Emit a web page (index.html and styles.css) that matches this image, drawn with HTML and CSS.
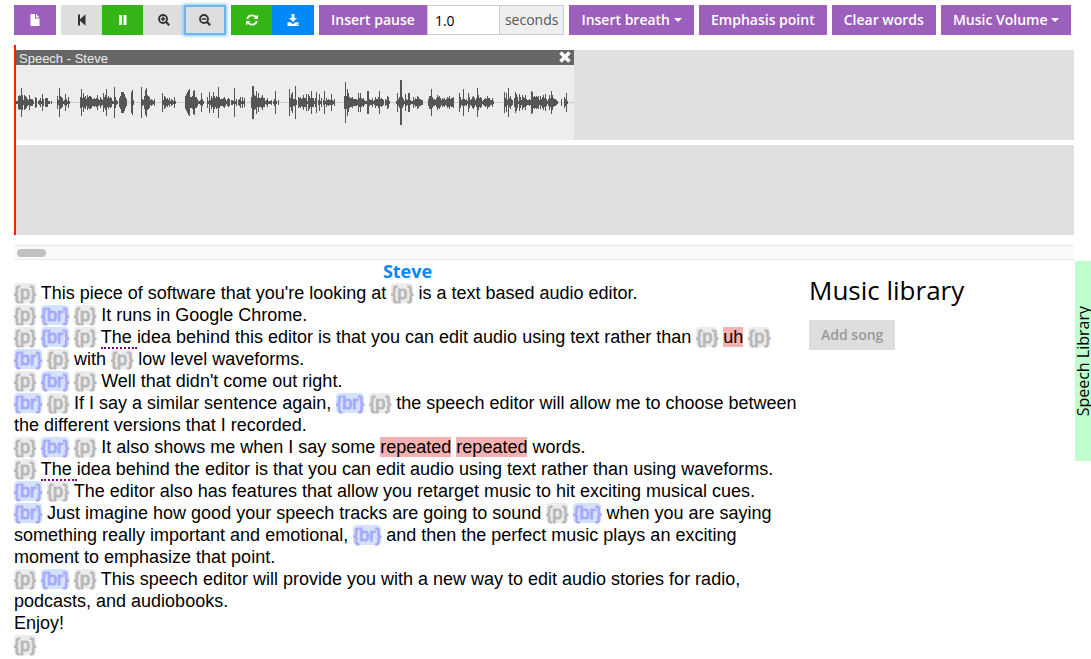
FILE: index.html
```html
<!DOCTYPE html>
<html lang="en">
<head>
<meta charset="utf-8">
<title>Speech editor</title>
<link rel="stylesheet" href="styles.css">
</head>
<body>
<div class="page">
  <div class="toolbar">
    <button class="btn purple icon" aria-label="New file"><svg width="12" height="12" viewBox="0 0 12 12"><path fill="currentColor" d="M1.500 0H6v4.500h4.500V12h-9zM7 0l3.500 3.500H7z"/></svg></button>
    <div class="group">
      <button class="btn gray icon" aria-label="Rewind"><svg width="12" height="12" viewBox="0 0 12 12"><path fill="currentColor" d="M2 .5h2v4.700L9.500.3v11.400L4 6.800v4.700H2z"/></svg></button>
      <button class="btn green icon" aria-label="Pause"><svg width="12" height="12" viewBox="0 0 12 12"><path fill="currentColor" d="M2 1h3v10H2zM6.500 1h3v10h-3z"/></svg></button>
      <button class="btn gray icon" aria-label="Zoom in"><svg width="12" height="12" viewBox="0 0 12 12"><g fill="none" stroke="currentColor"><circle cx="5" cy="5" r="4" stroke-width="1.800"/><path d="M8 8l3.200 3.200" stroke-width="2.200"/><path d="M5 2.800v4.400M2.800 5h4.400" stroke-width="1.500"/></g></svg></button>
      <button class="btn gray icon focused" aria-label="Zoom out"><svg width="12" height="12" viewBox="0 0 12 12"><g fill="none" stroke="currentColor"><circle cx="5" cy="5" r="4" stroke-width="1.800"/><path d="M8 8l3.200 3.200" stroke-width="2.200"/><path d="M2.800 5h4.400" stroke-width="1.500"/></g></svg></button>
    </div>
    <div class="group">
      <button class="btn green icon" aria-label="Refresh"><svg width="12" height="12" viewBox="0 0 12 12"><g fill="none" stroke="currentColor" stroke-width="1.800"><path d="M1.200 5C1.800 2.700 3.700 1.400 6 1.400c1.500 0 2.700.6 3.600 1.600"/><path d="M10.800 7c-.6 2.300-2.500 3.600-4.800 3.600-1.500 0-2.700-.6-3.600-1.600"/></g><path fill="currentColor" d="M12 .5V5H7.500zM0 11.500V7h4.500z"/></svg></button>
      <button class="btn blue icon" aria-label="Download"><svg width="12" height="12" viewBox="0 0 12 12"><path fill="currentColor" d="M4.600 0h2.800v4H10L6 8 2 4h2.600zM.5 8.300h3L6 10.200l2.500-1.900h3V12H.5z"/><path fill="#0089f7" d="M9.500 9.700h1v1h-1z"/></svg></button>
    </div>
    <div class="group">
      <button class="btn purple">Insert pause</button>
      <input class="seconds" id="seconds" type="text" value="1.0">
      <label class="addon" for="seconds">seconds</label>
    </div>
    <button class="btn purple">Insert breath<span class="caret"></span></button>
    <button class="btn purple">Emphasis point</button>
    <button class="btn purple">Clear words</button>
    <button class="btn purple">Music Volume<span class="caret"></span></button>
  </div>

  <div class="timeline">
    <div class="track">
      <div class="clip">
        <div class="clip-head"><span>Speech - Steve</span>
          <button class="close" aria-label="Remove clip"><svg width="12" height="12" viewBox="0 0 12 12"><path stroke="currentColor" stroke-width="3.600" d="M1.500 1.500l9 9M10.500 1.500l-9 9"/></svg></button>
        </div>
        <svg class="wave" viewBox="0 0 560 75" width="560" height="75"><path id="axis" d="M2 37.500H560"/><path id="wave"/></svg>
      </div>
    </div>
    <div class="track"></div>
    <div class="playhead"></div>
  </div>
  <div class="scroller"><div class="thumb"></div></div>

  <div class="content">
    <div class="script">
      <h2 class="speaker">Steve</h2>
      <p><i class="p">{p}</i> This piece of software that you're looking at <i class="p">{p}</i> is a text based audio editor.</p>
      <p><i class="p">{p}</i> <i class="br">{br}</i> <i class="p">{p}</i> It runs in Google Chrome.</p>
      <p><i class="p">{p}</i> <i class="br">{br}</i> <i class="p">{p}</i> <span class="alt">The </span>idea behind this editor is that you can edit audio using text rather than <i class="p">{p}</i> <mark>uh</mark> <i class="p">{p}</i> <i class="br">{br}</i> <i class="p">{p}</i> with <i class="p">{p}</i> low level waveforms.</p>
      <p><i class="p">{p}</i> <i class="br">{br}</i> <i class="p">{p}</i> Well that didn't come out right.</p>
      <p><i class="br">{br}</i> <i class="p">{p}</i> If I say a similar sentence again, <i class="br">{br}</i> <i class="p">{p}</i> the speech editor will allow me to choose between the different versions that I recorded.</p>
      <p><i class="p">{p}</i> <i class="br">{br}</i> <i class="p">{p}</i> It also shows me when I say some <mark>repeated</mark> <mark>repeated</mark> words.</p>
      <p><i class="p">{p}</i> <span class="alt">The </span>idea behind the editor is that you can edit audio using text rather than using waveforms.</p>
      <p><i class="br">{br}</i> <i class="p">{p}</i> The editor also has features that allow you retarget music to hit exciting musical cues.</p>
      <p><i class="br">{br}</i> Just imagine how good your speech tracks are going to sound <i class="p">{p}</i> <i class="br">{br}</i> when you are saying something really important and emotional, <i class="br">{br}</i> and then the perfect music plays an exciting moment to emphasize that point.</p>
      <p><i class="p">{p}</i> <i class="br">{br}</i> <i class="p">{p}</i> This speech editor will provide you with a new way to edit audio stories for radio, podcasts, and audiobooks.</p>
      <p>Enjoy!</p>
      <p><i class="p">{p}</i></p>
    </div>
    <div class="library">
      <h1>Music library</h1>
      <button class="btn gray disabled" disabled>Add song</button>
    </div>
  </div>
</div>
<div class="speech-tab"><span>Speech Library</span></div>
<script src="wave.js"></script>
</body>
</html>
```

FILE: styles.css
```css
* { box-sizing: border-box; }
body { margin: 0; background: #fff; color: #000; font: 14px/20px "Open Sans", sans-serif; overflow: hidden; }
.page { padding: 5px 17px 0 14px; }

.toolbar { display: flex; gap: 5px; white-space: nowrap; }
.group { display: flex; }
.btn { display: flex; align-items: center; height: 30px; margin: 0; padding: 0 12px; border: 0; border-radius: 0; color: #fff; font: 600 14px/20px "Open Sans", sans-serif; }
.icon { width: 41px; flex: none; justify-content: center; }
.toolbar > .icon, .group .blue, .focused { width: 42px; }
.purple { background: #9c5fbb; }
.green { background: #34b616; }
.blue { background: #0089f7; }
.gray { background: #dedede; color: #333; }
.focused { position: relative; border: 2px solid #6cb3f3; box-shadow: 0 0 3px 1px #8ac4f7; }
.caret { margin-left: 4px; border: 4px solid transparent; border-top-color: #fff; border-bottom: 0; }
.seconds { width: 73px; height: 30px; padding: 0 7px; border: 1px solid #ccc; border-radius: 0; background: #fff; color: #000; font: 14px/20px "Open Sans", sans-serif; }
.addon { margin-left: -1px; padding: 4px 5px; border: 1px solid #ccc; background: #eee; color: #555; }

.timeline { position: relative; display: grid; gap: 5px; margin-top: 10px; padding-top: 5px; }
.track { height: 90px; background: #e0e0e0; }
.clip { width: 560px; height: 90px; background: #ededed; }
.clip-head { display: flex; justify-content: space-between; height: 15px; padding: 0 3px 0 5px; background: #666; color: #eee; font: 13px/18px "Liberation Sans", Arial, sans-serif; overflow: hidden; }
.close { display: flex; padding: 1px 0 0; border: 0; background: none; color: #fff; }
.wave { display: block; }
#wave { stroke: #555; }
#axis { stroke: #ccc; }
.playhead { position: absolute; top: 0; bottom: 0; left: 0; width: 2px; background: #ff2000; }

.scroller { height: 15px; margin-top: 10px; padding: 3px; border: 1px solid #e8e8e8; border-width: 1px 0; background: #fafafa; }
.thumb { width: 29px; height: 8px; border-radius: 4px; background: #c1c1c1; }

.content { display: grid; grid-template-columns: 3fr 1fr; }
.script { padding-right: 8px; font: 18px/22px "Liberation Sans", Arial, sans-serif; }
.speaker { margin: 0; color: #0089ff; font: bold 18px/22px "Open Sans", sans-serif; text-align: center; }
.script p { margin: 0; }
.script i { border-radius: 4px; font-style: normal; -webkit-text-stroke: 1px currentColor; }
.p { background: #ececec; color: #b8b8b8; }
.br { background: #d3e3ff; color: #a9a9fb; }
.script mark { background: #f3b1b1; color: inherit; }
.alt { border-bottom: 2px dotted #800080; }
.library h1 { margin: 14px 0; font: 26px/32px "Open Sans", sans-serif; }
.disabled { color: #999; }

.speech-tab { position: fixed; top: 261px; right: 0; display: flex; align-items: center; width: 16px; height: 200px; background: #bfffcf; overflow: hidden; }
.speech-tab span { flex: none; writing-mode: vertical-rl; transform: rotate(180deg); font-size: 16px; line-height: 16px; white-space: nowrap; }
```

FILE: wave.js
```javascript
// One base-36 digit per pixel column: the half height of the waveform.
var levels = [
  "11676e72765327333105401241830444110100000",
  "62e65412831510000000000",
  "5d495637566533434732532957d4645411f52",
  "1046aaa8530000ac20000000",
  "f326ce76523213000000092653424132151000000000",
  "68acd556bc5531129310005",
  "1a264a6465f533345313430221e1302351514000000",
  "5gg76b494457441241112013b1020000000000",
  "d48a33g205453474481864b4414a028",
  "1402b1423228213000000000",
  "6k6d9544533332949434211bb3224125",
  "335b34320326510000001935mm5318329921152436533220",
  "0000366d533247564243423546344500000",
  "9523d3231952356424e74541234364422410000000000",
  "a492e463204a851852754732232ba5656562635748313",
  "74b74332100030053910000"
].join("");
var d = "";
for (var i = 0; i < levels.length; i++) {
  var h = parseInt(levels[i], 36);
  if (h) d += "M" + (i + 2.5) + " " + (37 - h) + "v" + (2 * h + 1);
}
document.getElementById("wave").setAttribute("d", d);
```
